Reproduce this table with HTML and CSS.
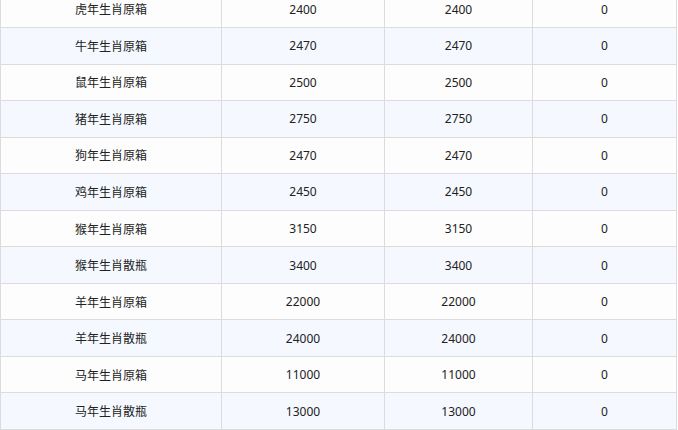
FILE: index.html
```html
<!DOCTYPE html>
<html lang="zh-CN">
<head>
<meta charset="utf-8">
<title>生肖原箱</title>
<link rel="stylesheet" href="styles.css">
</head>
<body>
<div class="table">
  <div class="row"><div class="cell">虎年生肖原箱</div><div class="cell">2400</div><div class="cell">2400</div><div class="cell">0</div></div>
  <div class="row"><div class="cell">牛年生肖原箱</div><div class="cell">2470</div><div class="cell">2470</div><div class="cell">0</div></div>
  <div class="row"><div class="cell">鼠年生肖原箱</div><div class="cell">2500</div><div class="cell">2500</div><div class="cell">0</div></div>
  <div class="row"><div class="cell">猪年生肖原箱</div><div class="cell">2750</div><div class="cell">2750</div><div class="cell">0</div></div>
  <div class="row"><div class="cell">狗年生肖原箱</div><div class="cell">2470</div><div class="cell">2470</div><div class="cell">0</div></div>
  <div class="row"><div class="cell">鸡年生肖原箱</div><div class="cell">2450</div><div class="cell">2450</div><div class="cell">0</div></div>
  <div class="row"><div class="cell">猴年生肖原箱</div><div class="cell">3150</div><div class="cell">3150</div><div class="cell">0</div></div>
  <div class="row"><div class="cell">猴年生肖散瓶</div><div class="cell">3400</div><div class="cell">3400</div><div class="cell">0</div></div>
  <div class="row"><div class="cell">羊年生肖原箱</div><div class="cell">22000</div><div class="cell">22000</div><div class="cell">0</div></div>
  <div class="row"><div class="cell">羊年生肖散瓶</div><div class="cell">24000</div><div class="cell">24000</div><div class="cell">0</div></div>
  <div class="row"><div class="cell">马年生肖原箱</div><div class="cell">11000</div><div class="cell">11000</div><div class="cell">0</div></div>
  <div class="row"><div class="cell">马年生肖散瓶</div><div class="cell">13000</div><div class="cell">13000</div><div class="cell">0</div></div>
</div>
</body>
</html>
```
FILE: styles.css
```css
html, body {
  margin: 0;
  padding: 0;
  background: #ffffff;
  overflow: hidden;
}
body {
  font-family: "Noto Sans", "Noto Sans CJK SC", sans-serif;
  font-size: 12px;
  color: #222222;
}
.table {
  width: 677px;
  margin-top: -8.55px;
  border-left: 1px solid #dcdcdc;
  border-right: 1px solid #dcdcdc;
  box-sizing: border-box;
}
.row {
  display: grid;
  grid-template-columns: 221px 163px 148px 143px;
  height: 36.55px;
  box-sizing: border-box;
  border-bottom: 1px solid #dcdcdc;
  background: #fdfdfd;
}
.row:nth-child(even) {
  background: #f5f9ff;
}
.cell {
  display: flex;
  align-items: center;
  justify-content: center;
  border-right: 1px solid #dcdcdc;
  box-sizing: border-box;
}
.cell:last-child {
  border-right: none;
}
```
